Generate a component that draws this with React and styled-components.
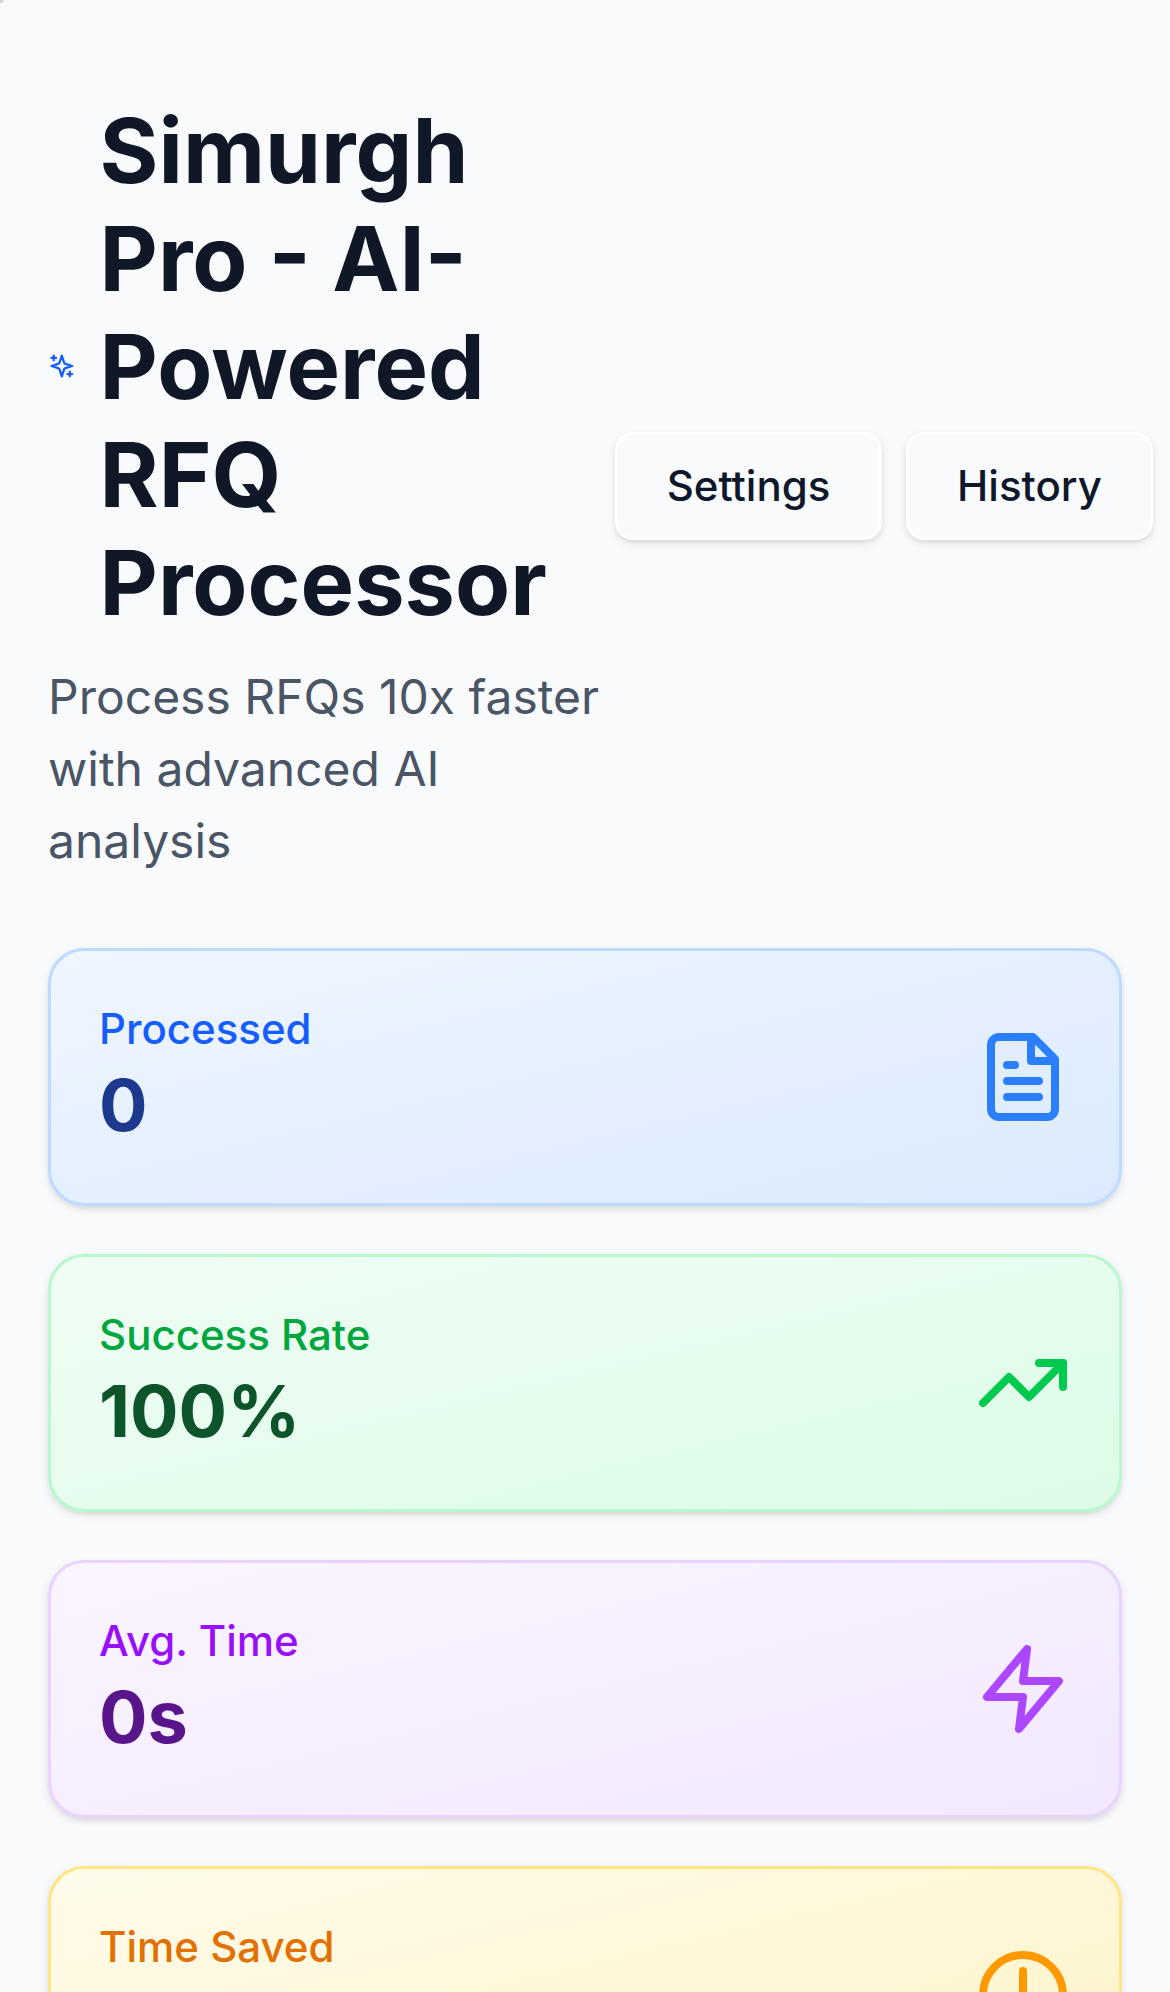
import React from "react";
import styled, { createGlobalStyle } from "styled-components";

const GlobalStyle = createGlobalStyle`
  *, *::before, *::after { box-sizing: border-box; }
  html, body { margin: 0; padding: 0; height: 100%; overflow: hidden; }
  body {
    background: #f9fafc;
    font-family: Inter, "Liberation Sans", sans-serif;
  }
  h1, p { margin: 0; }
`;

const Page = styled.main`
  position: relative;
  height: 1992px;
  overflow: hidden;
  padding: 96px 48px;
`;

const CornerMark = styled.span`
  position: absolute;
  top: 0;
  left: 0;
  width: 3px;
  height: 3px;
  background: #d4d4d6;
`;

const Header = styled.header`
  display: flex;
  align-items: center;
  margin-bottom: 72px;
`;

const Intro = styled.div`
  flex: 0 0 567px;
`;

const TitleRow = styled.div`
  display: flex;
  align-items: center;
  gap: 24px;
  margin-bottom: 24px;
`;

const Title = styled.h1`
  flex: 1;
  padding-top: 1px;
  margin-bottom: -1px;
  font-size: 90px;
  line-height: 108px;
  font-weight: 700;
  color: #101828;
`;

const Subtitle = styled.p`
  padding-top: 1px;
  margin-bottom: -1px;
  font-size: 48px;
  line-height: 72px;
  color: #4a5565;
`;

const Actions = styled.div`
  display: flex;
  flex: none;
  gap: 24px;
`;

const Button = styled.button`
  width: ${(p) => p.$width}px;
  height: 108px;
  padding: 0;
  border: 3px solid #ffffff;
  border-radius: 18px;
  background: #f9fafc;
  box-shadow: 0 3px 9px rgba(0, 0, 0, 0.1), 0 3px 6px -3px rgba(0, 0, 0, 0.1);
  font: 500 42px/60px Inter, "Liberation Sans", sans-serif;
  color: #0f172b;
`;

const Stats = styled.section`
  display: flex;
  flex-direction: column;
  gap: 48px;
`;

const Card = styled.article`
  display: flex;
  flex: none;
  align-items: center;
  justify-content: space-between;
  height: 258px;
  padding: 48px;
  border: 3px solid ${(p) => p.$tone.border};
  border-radius: 36px;
  background: linear-gradient(to bottom right in oklab, ${(p) => p.$tone.from}, ${(p) => p.$tone.to});
  box-shadow: 0 3px 9px rgba(0, 0, 0, 0.1), 0 3px 6px -3px rgba(0, 0, 0, 0.1);
`;

const CardText = styled.div`
  height: 156px;
`;

const Label = styled.p`
  font-size: 42px;
  line-height: 60px;
  font-weight: 500;
  color: ${(p) => p.$color};
`;

const Value = styled.p`
  font-size: 72px;
  line-height: 91px;
  font-weight: 700;
  color: ${(p) => p.$color};
`;

const Icon = styled.svg`
  flex: none;
  width: ${(p) => p.$width}px;
  height: 96px;
  fill: none;
  stroke: ${(p) => p.$color};
  stroke-width: 2;
  stroke-linecap: round;
  stroke-linejoin: round;
`;

const stats = [
  {
    label: "Processed",
    value: "0",
    tone: { from: "#eff6ff", to: "#dbeafe", border: "#bedbff", label: "#155dfc", value: "#1c398e", icon: "#2b7fff" },
    icon: (
      <>
        <path d="M14.5 2H6a2 2 0 0 0-2 2v16a2 2 0 0 0 2 2h12a2 2 0 0 0 2-2V7.5L14.5 2z" />
        <path d="M14 2v6h6M16 13H8M16 17H8M10 9H8" />
      </>
    ),
  },
  {
    label: "Success Rate",
    value: "100%",
    tone: { from: "#f0fdf4", to: "#dcfce7", border: "#b9f8cf", label: "#00a63e", value: "#0d542b", icon: "#00c950" },
    icon: (
      <>
        <polyline points="22 7 13.5 15.5 8.5 10.5 2 17" />
        <polyline points="16 7 22 7 22 13" />
      </>
    ),
  },
  {
    label: "Avg. Time",
    value: "0s",
    tone: { from: "#faf5ff", to: "#f3e8ff", border: "#e9d4ff", label: "#9810fa", value: "#59168b", icon: "#ad46ff" },
    icon: <polygon points="13 2 3 14 12 14 11 22 21 10 12 10 13 2" />,
  },
  {
    label: "Time Saved",
    tone: { from: "#fffbeb", to: "#fef3c6", border: "#fee685", label: "#e17100", value: "#7b3306", icon: "#fe9a00" },
    icon: (
      <>
        <circle cx="12" cy="12" r="10" />
        <polyline points="12 6 12 12 16 14" />
      </>
    ),
  },
];

export default function App() {
  return (
    <>
      <GlobalStyle />
      <Page>
        <CornerMark />
        <Header>
          <Intro>
            <TitleRow>
              <Icon viewBox="0 0 24 24" $width={27.6} $color="#155dfc">
                <path d="m12 3-1.912 5.813a2 2 0 0 1-1.275 1.275L3 12l5.813 1.912a2 2 0 0 1 1.275 1.275L12 21l1.912-5.813a2 2 0 0 1 1.275-1.275L21 12l-5.813-1.912a2 2 0 0 1-1.275-1.275L12 3Z" />
                <path d="M5 3v4M19 17v4M3 5h4M17 19h4" />
              </Icon>
              <Title>Simurgh Pro - AI-Powered RFQ Processor</Title>
            </TitleRow>
            <Subtitle>Process RFQs 10x faster with advanced AI analysis</Subtitle>
          </Intro>
          <Actions>
            <Button $width={267}>Settings</Button>
            <Button $width={247}>History</Button>
          </Actions>
        </Header>
        <Stats>
          {stats.map((s) => (
            <Card key={s.label} $tone={s.tone}>
              <CardText>
                <Label $color={s.tone.label}>{s.label}</Label>
                {s.value && <Value $color={s.tone.value}>{s.value}</Value>}
              </CardText>
              <Icon viewBox="0 0 24 24" $width={96} $color={s.tone.icon}>
                {s.icon}
              </Icon>
            </Card>
          ))}
        </Stats>
      </Page>
    </>
  );
}
